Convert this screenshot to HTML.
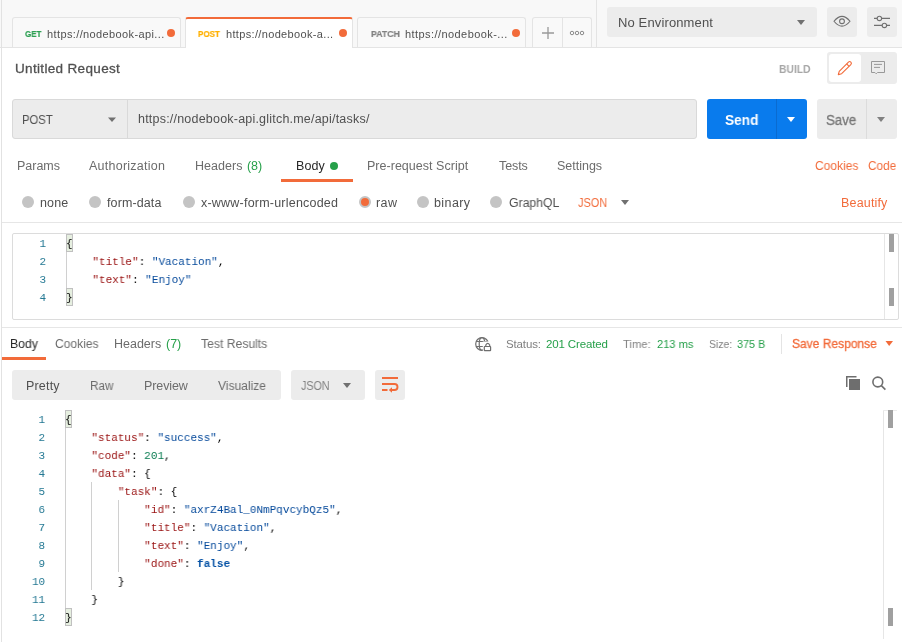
<!DOCTYPE html>
<html><head><meta charset="utf-8"><style>
html,body{margin:0;padding:0}
body{width:902px;height:642px;overflow:hidden;position:relative;background:#fff;font-family:'Liberation Sans', sans-serif}
.b{position:absolute}
.t{position:absolute;white-space:pre;line-height:20px;will-change:transform}
.c{position:absolute;white-space:pre;will-change:transform;font-family:'Liberation Mono', monospace;font-size:11.5px;line-height:18px;height:18px;transform-origin:0 0;transform:scaleX(0.95652)}
</style></head><body>
<div class="b" style="left:0px;top:0px;width:902px;height:47px;background:#f8f8f8"></div><div class="b" style="left:0px;top:47px;width:902px;height:1px;background:#e4e4e4"></div><div class="b" style="left:12px;top:17px;width:169px;height:30px;background:#f9f9f9;border:1px solid #e4e4e4;border-bottom:none;border-radius:3px 3px 0 0;box-sizing:border-box"></div><div class="b" style="left:185px;top:17px;width:168px;height:31px;background:#fff;border:1px solid #e4e4e4;border-top:2px solid #f26b3a;border-bottom:none;border-radius:3px 3px 0 0;box-sizing:border-box"></div><div class="b" style="left:357px;top:17px;width:169px;height:30px;background:#f9f9f9;border:1px solid #e4e4e4;border-bottom:none;border-radius:3px 3px 0 0;box-sizing:border-box"></div><div class="b" style="left:532px;top:17px;width:60px;height:30px;background:#f9f9f9;border:1px solid #e4e4e4;border-bottom:none;border-radius:3px 3px 0 0;box-sizing:border-box"></div><div class="b" style="left:562px;top:17px;width:1px;height:30px;background:#e4e4e4"></div><div class="b" style="left:596px;top:0px;width:1px;height:47px;background:#e4e4e4"></div><div class="b" style="left:167px;top:29px;width:8px;height:8px;background:#f26b3a;border-radius:50%"></div><div class="b" style="left:339px;top:29px;width:8px;height:8px;background:#f26b3a;border-radius:50%"></div><div class="b" style="left:511.79999999999995px;top:29px;width:8px;height:8px;background:#f26b3a;border-radius:50%"></div><div class="b" style="left:607px;top:7px;width:210px;height:30px;background:#ececec;border-radius:3px"></div><div class="b" style="left:827px;top:7px;width:30px;height:30px;background:#ececec;border-radius:3px"></div><div class="b" style="left:867px;top:7px;width:30px;height:30px;background:#ececec;border-radius:3px"></div><div class="b" style="left:1px;top:0px;width:1px;height:642px;background:#e2e2e2"></div><div class="b" style="left:827px;top:52px;width:70px;height:32px;background:#ececec;border-radius:3px"></div><div class="b" style="left:829px;top:54px;width:32px;height:28px;background:#fff;border-radius:3px"></div><div class="b" style="left:12px;top:99px;width:685px;height:40px;background:#ececec;border:1px solid #d9d9d9;border-radius:3px;box-sizing:border-box"></div><div class="b" style="left:127px;top:100px;width:1px;height:38px;background:#d9d9d9"></div><div class="b" style="left:707px;top:99px;width:100px;height:40px;background:#097bed;border-radius:3px"></div><div class="b" style="left:776px;top:99px;width:1px;height:40px;background:#0a6bd0"></div><div class="b" style="left:817px;top:99px;width:80px;height:40px;background:#ececec;border-radius:3px"></div><div class="b" style="left:866px;top:99px;width:1px;height:40px;background:#dcdcdc"></div><div class="b" style="left:281px;top:179px;width:72px;height:3px;background:#f26b3a"></div><div class="b" style="left:330px;top:162px;width:8px;height:8px;background:#26a04a;border-radius:50%"></div><div class="b" style="left:22px;top:196px;width:12px;height:12px;background:#c4c4c4;border-radius:50%"></div><div class="b" style="left:89px;top:196px;width:12px;height:12px;background:#c4c4c4;border-radius:50%"></div><div class="b" style="left:183px;top:196px;width:12px;height:12px;background:#c4c4c4;border-radius:50%"></div><div class="b" style="left:417px;top:196px;width:12px;height:12px;background:#c4c4c4;border-radius:50%"></div><div class="b" style="left:490.3px;top:196px;width:12px;height:12px;background:#c4c4c4;border-radius:50%"></div><div class="b" style="left:358.5px;top:196px;width:12px;height:12px;background:#f26b3a;border:2px solid #c4c4c4;border-radius:50%;box-sizing:border-box"></div><div class="b" style="left:2px;top:222px;width:900px;height:1px;background:#e6e6e6"></div><div class="b" style="left:2px;top:327px;width:900px;height:1px;background:#e6e6e6"></div><div class="b" style="left:12px;top:233px;width:887px;height:87px;border:1px solid #dcdcdc;border-radius:2px;box-sizing:border-box;background:#fff"></div><div class="b" style="left:884px;top:234px;width:1px;height:85px;background:#e6e6e6"></div><div class="b" style="left:889px;top:234px;width:5px;height:18px;background:#a0a0a0"></div><div class="b" style="left:889px;top:288px;width:5px;height:18px;background:#a0a0a0"></div><div class="b" style="left:2px;top:357px;width:44px;height:3px;background:#f26b3a"></div><div class="b" style="left:781px;top:334px;width:1px;height:20px;background:#e4e4e4"></div><div class="b" style="left:12px;top:370px;width:269px;height:30px;background:#ececec;border-radius:3px"></div><div class="b" style="left:291px;top:370px;width:74px;height:30px;background:#ececec;border-radius:3px"></div><div class="b" style="left:375px;top:370px;width:30px;height:30px;background:#ececec;border-radius:3px"></div><div class="b" style="left:883px;top:410px;width:1px;height:229px;background:#e6e6e6"></div><div class="b" style="left:883px;top:410px;width:14px;height:1px;background:#ececec"></div><div class="b" style="left:888px;top:410px;width:5px;height:18px;background:#a0a0a0"></div><div class="b" style="left:888px;top:608px;width:5px;height:18px;background:#a0a0a0"></div>
<svg class="b" style="left:0;top:0" width="902" height="642" viewBox="0 0 902 642">
<g fill="#707070">
<path d="M797 20 L805 20 L801 25 Z"/>
<path d="M108 117.5 L116 117.5 L112 122 Z"/>
<path d="M877 117 L885 117 L881 122 Z" fill="#808080"/>
<path d="M621 200 L629 200 L625 205 Z"/>
<path d="M343 383 L351 383 L347 388 Z"/>
</g>
<path d="M787 117 L795 117 L791 122 Z" fill="#fff"/>
<path d="M885.5 341 L893 341 L889.2 346 Z" fill="#f26b3a"/>
<g stroke="#999" stroke-width="1.3" fill="none"><path d="M542 33 H554 M548 27 V39"/></g>
<g stroke="#858585" stroke-width="0.95" fill="none"><circle cx="572" cy="33" r="1.75"/><circle cx="577" cy="33" r="1.75"/><circle cx="582" cy="33" r="1.75"/></g>

<g fill="none" stroke="#707070" stroke-width="1.1">
<path d="M834 21.25 Q842 11.5 850 21.25 Q842 31 834 21.25 Z"/>
<circle cx="842" cy="21.25" r="2.4"/>
<path d="M874 18.4 H877 M882 18.4 H890 M874 25.4 H882 M887 25.4 H890"/>
<circle cx="879.4" cy="18.4" r="2.2"/>
<circle cx="884.4" cy="25.4" r="2.2"/>
</g>
<g fill="none" stroke="#f26b3a" stroke-width="1.1" stroke-linejoin="round">
<path d="M838.3 74.6 L839.23 71.28 L848.44 62.13 A1.7 1.7 0 0 1 850.84 64.55 L841.63 73.7 Z"/>
<path d="M846.67 63.89 L849.07 66.31"/>
</g>
<g fill="none" stroke="#999" stroke-width="1">
<path d="M871.5 61.5 H884.5 V72.5 H877.5 L876.2 73.8 L874.9 72.5 H871.5 Z"/>
<path d="M874 64.4 H882 M874 67.4 H880"/>
</g>
<g fill="none" stroke="#6e6e6e" stroke-width="1.2">
<circle cx="482" cy="344" r="6.3"/>
<ellipse cx="482" cy="344" rx="2.8" ry="6.3"/>
<path d="M476 341.5 H488 M476 346.5 H488"/>
</g>
<rect x="482.8" y="341.5" width="10" height="11" fill="#fff"/>
<g fill="none" stroke="#6e6e6e" stroke-width="1.2">
<rect x="484.3" y="346.5" width="6.3" height="4.2" rx="0.5"/>
<path d="M485.8 346.3 V345 Q487.75 341.8 489.7 345 V346.3"/>
</g>
<g fill="none" stroke="#f26b3a" stroke-width="1.9">
<path d="M382 378 H398 M382 384 H394.5 A3 3 0 0 1 394.5 390 H391 M382 390 H387.5"/>
</g>
<path d="M388.8 390 L392 387.2 L392 392.8 Z" fill="#f26b3a"/>
<g fill="#6e6e6e">
<path d="M846 376 H856.5 V377.5 H847.5 V387 H846 Z"/>
<rect x="849" y="379" width="11" height="11"/>
</g>
<g fill="none" stroke="#6e6e6e" stroke-width="1.6">
<circle cx="877.8" cy="382" r="4.9"/>
<path d="M881.4 385.6 L885.4 389.6"/>
</g>
</svg>
<div class="b" style="left:66px;top:234px;width:7px;height:18px;background:#e6efe0;border:1px solid #c0c0c0;box-sizing:border-box"></div><div class="b" style="left:66px;top:288px;width:7px;height:18px;background:#e6efe0;border:1px solid #c0c0c0;box-sizing:border-box"></div><div class="b" style="left:66px;top:252px;width:1px;height:36px;background:#d0d0d0"></div><div class="b" style="left:65px;top:410px;width:7px;height:18px;background:#e6efe0;border:1px solid #c0c0c0;box-sizing:border-box"></div><div class="b" style="left:65px;top:608px;width:7px;height:18px;background:#e6efe0;border:1px solid #c0c0c0;box-sizing:border-box"></div><div class="b" style="left:65px;top:428px;width:1px;height:180px;background:#d0d0d0"></div><div class="b" style="left:91px;top:482px;width:1px;height:108px;background:#d0d0d0"></div><div class="b" style="left:118px;top:500px;width:1px;height:72px;background:#d0d0d0"></div><div class="c" style="left:1px;width:47.25px;text-align:right;top:234.6px;color:#237893">1</div><div class="c" style="left:65.5px;top:234.6px"><span style="color:#000">{</span></div><div class="c" style="left:1px;width:47.25px;text-align:right;top:252.6px;color:#237893">2</div><div class="c" style="left:65.5px;top:252.6px">    <span style="color:#980f0f">"title"</span><span style="color:#000">:</span> <span style="color:#03489a">"Vacation"</span><span style="color:#000">,</span></div><div class="c" style="left:1px;width:47.25px;text-align:right;top:270.6px;color:#237893">3</div><div class="c" style="left:65.5px;top:270.6px">    <span style="color:#980f0f">"text"</span><span style="color:#000">:</span> <span style="color:#03489a">"Enjoy"</span></div><div class="c" style="left:1px;width:47.25px;text-align:right;top:288.6px;color:#237893">4</div><div class="c" style="left:65.5px;top:288.6px"><span style="color:#000">}</span></div><div class="c" style="left:0px;width:47.25px;text-align:right;top:410.6px;color:#237893">1</div><div class="c" style="left:64.5px;top:410.6px"><span style="color:#000">{</span></div><div class="c" style="left:0px;width:47.25px;text-align:right;top:428.6px;color:#237893">2</div><div class="c" style="left:64.5px;top:428.6px">    <span style="color:#980f0f">"status"</span><span style="color:#000">:</span> <span style="color:#03489a">"success"</span><span style="color:#000">,</span></div><div class="c" style="left:0px;width:47.25px;text-align:right;top:446.6px;color:#237893">3</div><div class="c" style="left:64.5px;top:446.6px">    <span style="color:#980f0f">"code"</span><span style="color:#000">:</span> <span style="color:#067a4f">201</span><span style="color:#000">,</span></div><div class="c" style="left:0px;width:47.25px;text-align:right;top:464.6px;color:#237893">4</div><div class="c" style="left:64.5px;top:464.6px">    <span style="color:#980f0f">"data"</span><span style="color:#000">:</span> <span style="color:#000">{</span></div><div class="c" style="left:0px;width:47.25px;text-align:right;top:482.6px;color:#237893">5</div><div class="c" style="left:64.5px;top:482.6px">        <span style="color:#980f0f">"task"</span><span style="color:#000">:</span> <span style="color:#000">{</span></div><div class="c" style="left:0px;width:47.25px;text-align:right;top:500.6px;color:#237893">6</div><div class="c" style="left:64.5px;top:500.6px">            <span style="color:#980f0f">"id"</span><span style="color:#000">:</span> <span style="color:#03489a">"axrZ4Bal_0NmPqvcybQz5"</span><span style="color:#000">,</span></div><div class="c" style="left:0px;width:47.25px;text-align:right;top:518.6px;color:#237893">7</div><div class="c" style="left:64.5px;top:518.6px">            <span style="color:#980f0f">"title"</span><span style="color:#000">:</span> <span style="color:#03489a">"Vacation"</span><span style="color:#000">,</span></div><div class="c" style="left:0px;width:47.25px;text-align:right;top:536.6px;color:#237893">8</div><div class="c" style="left:64.5px;top:536.6px">            <span style="color:#980f0f">"text"</span><span style="color:#000">:</span> <span style="color:#03489a">"Enjoy"</span><span style="color:#000">,</span></div><div class="c" style="left:0px;width:47.25px;text-align:right;top:554.6px;color:#237893">9</div><div class="c" style="left:64.5px;top:554.6px">            <span style="color:#980f0f">"done"</span><span style="color:#000">:</span> <span style="color:#0451a5;font-weight:700">false</span></div><div class="c" style="left:0px;width:47.25px;text-align:right;top:572.6px;color:#237893">10</div><div class="c" style="left:64.5px;top:572.6px">        <span style="color:#000">}</span></div><div class="c" style="left:0px;width:47.25px;text-align:right;top:590.6px;color:#237893">11</div><div class="c" style="left:64.5px;top:590.6px">    <span style="color:#000">}</span></div><div class="c" style="left:0px;width:47.25px;text-align:right;top:608.6px;color:#237893">12</div><div class="c" style="left:64.5px;top:608.6px"><span style="color:#000">}</span></div>
<div class="t" style="left:25.00px;top:24.20px;font-size:9.7px;font-weight:700;color:#2b9f51;transform-origin:0px 0;transform:scaleX(0.8250);-webkit-text-stroke:0.2px currentColor">GET</div><div class="t" style="left:47.20px;top:23.60px;font-size:11px;font-weight:400;color:#505050;letter-spacing:0.382px;">https://nodebook-api...</div><div class="t" style="left:197.90px;top:24.20px;font-size:9.7px;font-weight:700;color:#ffb000;transform-origin:0px 0;transform:scaleX(0.8259);-webkit-text-stroke:0.2px currentColor">POST</div><div class="t" style="left:226.40px;top:23.60px;font-size:11px;font-weight:400;color:#505050;letter-spacing:0.340px;">https://nodebook-a...</div><div class="t" style="left:370.70px;top:24.20px;font-size:9.7px;font-weight:700;color:#808080;transform-origin:0px 0;transform:scaleX(0.9031);-webkit-text-stroke:0.2px currentColor">PATCH</div><div class="t" style="left:405.20px;top:23.60px;font-size:11px;font-weight:400;color:#505050;letter-spacing:0.432px;">https://nodebook-...</div><div class="t" style="left:617.70px;top:13.30px;font-size:13px;font-weight:400;color:#505050;letter-spacing:0.131px;">No Environment</div><div class="t" style="left:14.60px;top:59.00px;font-size:13.5px;font-weight:400;color:#505050;letter-spacing:0.333px;-webkit-text-stroke:0.3px currentColor">Untitled Request</div><div class="t" style="left:778.80px;top:59.00px;font-size:11px;font-weight:700;color:#a6a6a6;transform-origin:0px 0;transform:scaleX(0.9353);">BUILD</div><div class="t" style="left:22.30px;top:110.00px;font-size:12.5px;font-weight:400;color:#505050;transform-origin:1px 0;transform:scaleX(0.8970);">POST</div><div class="t" style="left:138.00px;top:109.40px;font-size:12.5px;font-weight:400;color:#505050;letter-spacing:0.208px;">https://nodebook-api.glitch.me/api/tasks/</div><div class="t" style="left:724.60px;top:110.00px;font-size:14px;font-weight:700;color:#fff;transform-origin:0px 0;transform:scaleX(0.9765);">Send</div><div class="t" style="left:826.00px;top:110.00px;font-size:14px;font-weight:400;color:#777;transform-origin:0px 0;transform:scaleX(0.9500);-webkit-text-stroke:0.3px currentColor">Save</div><div class="t" style="left:16.60px;top:156.00px;font-size:12.5px;font-weight:400;color:#6c6c6c;letter-spacing:-0.020px;">Params</div><div class="t" style="left:89.40px;top:156.00px;font-size:12.5px;font-weight:400;color:#6c6c6c;letter-spacing:0.242px;">Authorization</div><div class="t" style="left:194.60px;top:156.00px;font-size:12.5px;font-weight:400;color:#6c6c6c;letter-spacing:0.050px;">Headers</div><div class="t" style="left:246.50px;top:156.00px;font-size:12.5px;font-weight:400;color:#26a04a;letter-spacing:-0.050px;">(8)</div><div class="t" style="left:295.80px;top:156.00px;font-size:12.5px;font-weight:400;color:#282828;letter-spacing:0.067px;">Body</div><div class="t" style="left:367.30px;top:156.00px;font-size:12.5px;font-weight:400;color:#6c6c6c;letter-spacing:0.024px;">Pre-request Script</div><div class="t" style="left:498.60px;top:156.00px;font-size:12.5px;font-weight:400;color:#6c6c6c;letter-spacing:-0.100px;">Tests</div><div class="t" style="left:556.80px;top:156.00px;font-size:12.5px;font-weight:400;color:#6c6c6c;letter-spacing:-0.014px;">Settings</div><div class="t" style="left:814.60px;top:156.00px;font-size:12.5px;font-weight:400;color:#f26b3a;transform-origin:0px 0;transform:scaleX(0.9600);">Cookies</div><div class="t" style="left:868.40px;top:156.00px;font-size:12.5px;font-weight:400;color:#f26b3a;transform-origin:0px 0;transform:scaleX(0.9433);">Code</div><div class="t" style="left:39.90px;top:193.00px;font-size:12.5px;font-weight:400;color:#505050;letter-spacing:0.133px;">none</div><div class="t" style="left:107.20px;top:193.00px;font-size:12.5px;font-weight:400;color:#505050;letter-spacing:0.112px;">form-data</div><div class="t" style="left:201.00px;top:193.00px;font-size:12.5px;font-weight:400;color:#505050;letter-spacing:0.215px;">x-www-form-urlencoded</div><div class="t" style="left:375.60px;top:193.00px;font-size:12.5px;font-weight:400;color:#505050;letter-spacing:0.450px;">raw</div><div class="t" style="left:434.40px;top:193.00px;font-size:12.5px;font-weight:400;color:#505050;letter-spacing:0.400px;">binary</div><div class="t" style="left:508.60px;top:193.00px;font-size:12.5px;font-weight:400;color:#505050;transform-origin:0px 0;transform:scaleX(0.9784);">GraphQL</div><div class="t" style="left:578.40px;top:193.00px;font-size:12px;font-weight:400;color:#f26b3a;transform-origin:0px 0;transform:scaleX(0.9129);">JSON</div><div class="t" style="left:840.70px;top:193.00px;font-size:12.5px;font-weight:400;color:#f26b3a;letter-spacing:0.171px;">Beautify</div><div class="t" style="left:9.60px;top:334.00px;font-size:12.5px;font-weight:400;color:#282828;transform-origin:1px 0;transform:scaleX(0.9786);">Body</div><div class="t" style="left:54.80px;top:334.00px;font-size:12.5px;font-weight:400;color:#6c6c6c;transform-origin:0px 0;transform:scaleX(0.9622);">Cookies</div><div class="t" style="left:113.60px;top:334.00px;font-size:12.5px;font-weight:400;color:#6c6c6c;letter-spacing:-0.017px;">Headers</div><div class="t" style="left:165.50px;top:334.00px;font-size:12.5px;font-weight:400;color:#26a04a;letter-spacing:0.000px;">(7)</div><div class="t" style="left:201.40px;top:334.00px;font-size:12.5px;font-weight:400;color:#6c6c6c;transform-origin:0px 0;transform:scaleX(0.9735);">Test Results</div><div class="t" style="left:505.80px;top:334.00px;font-size:11.5px;font-weight:400;color:#808080;letter-spacing:-0.133px;">Status:</div><div class="t" style="left:545.80px;top:334.00px;font-size:11.5px;font-weight:400;color:#26a04a;letter-spacing:-0.130px;">201 Created</div><div class="t" style="left:622.90px;top:334.00px;font-size:11.5px;font-weight:400;color:#808080;transform-origin:0px 0;transform:scaleX(0.9750);">Time:</div><div class="t" style="left:656.60px;top:334.00px;font-size:11.5px;font-weight:400;color:#26a04a;transform-origin:0px 0;transform:scaleX(0.9632);">213 ms</div><div class="t" style="left:708.90px;top:334.00px;font-size:11.5px;font-weight:400;color:#808080;transform-origin:0px 0;transform:scaleX(0.9080);">Size:</div><div class="t" style="left:736.80px;top:334.00px;font-size:11.5px;font-weight:400;color:#26a04a;transform-origin:0px 0;transform:scaleX(0.9400);">375 B</div><div class="t" style="left:791.70px;top:334.00px;font-size:12.5px;font-weight:400;color:#f26b3a;transform-origin:0px 0;transform:scaleX(0.9614);-webkit-text-stroke:0.3px currentColor">Save Response</div><div class="t" style="left:26.20px;top:376.00px;font-size:12.5px;font-weight:400;color:#505050;letter-spacing:0.180px;">Pretty</div><div class="t" style="left:90.30px;top:376.00px;font-size:12.5px;font-weight:400;color:#6c6c6c;transform-origin:1px 0;transform:scaleX(0.9333);">Raw</div><div class="t" style="left:143.50px;top:376.00px;font-size:12.5px;font-weight:400;color:#6c6c6c;letter-spacing:-0.100px;">Preview</div><div class="t" style="left:217.80px;top:376.00px;font-size:12.5px;font-weight:400;color:#6c6c6c;transform-origin:0px 0;transform:scaleX(0.9640);">Visualize</div><div class="t" style="left:301.00px;top:376.00px;font-size:12px;font-weight:400;color:#808080;transform-origin:0px 0;transform:scaleX(0.8935);">JSON</div>
</body></html>
